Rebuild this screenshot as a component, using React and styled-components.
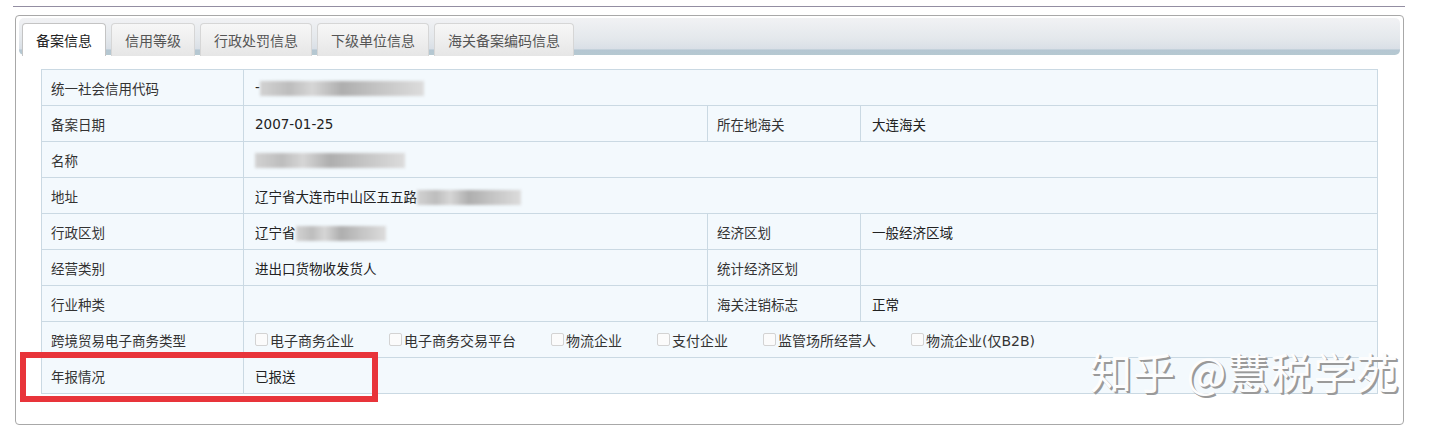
import React from 'react'
import styled, { createGlobalStyle } from 'styled-components'

const GlobalStyle = createGlobalStyle`
  body {
    margin: 0;
    background: #fff;
    font-family: "DejaVu Sans", "Noto Sans CJK SC", sans-serif;
    font-size: 14px;
    color: #333;
  }
`

const tabs = ['备案信息', '信用等级', '行政处罚信息', '下级单位信息', '海关备案编码信息']

const ecomTypes = ['电子商务企业', '电子商务交易平台', '物流企业', '支付企业', '监管场所经营人', '物流企业(仅B2B)']

function App() {
  return (
    <Page>
      <GlobalStyle />
      <TopRule />
      <Panel>
        <TabBar>
          {tabs.map((t, i) => (
            <Tab key={t} $active={i === 0}>{t}</Tab>
          ))}
        </TabBar>
        <Content>
          <InfoTable>
            <colgroup>
              <col style={{ width: 202 }} />
              <col style={{ width: 464 }} />
              <col style={{ width: 153 }} />
              <col />
            </colgroup>
            <tbody>
              <tr>
                <Label>统一社会信用代码</Label>
                <Value colSpan={3}>-<Blur $w={164} /></Value>
              </tr>
              <tr>
                <Label>备案日期</Label>
                <Value>2007-01-25</Value>
                <Label>所在地海关</Label>
                <Value>大连海关</Value>
              </tr>
              <tr>
                <Label>名称</Label>
                <Value colSpan={3}><Blur $w={150} /></Value>
              </tr>
              <tr>
                <Label>地址</Label>
                <Value colSpan={3}>辽宁省大连市中山区五五路<Blur $w={104} /></Value>
              </tr>
              <tr>
                <Label>行政区划</Label>
                <Value>辽宁省<Blur $w={90} /></Value>
                <Label>经济区划</Label>
                <Value>一般经济区域</Value>
              </tr>
              <tr>
                <Label>经营类别</Label>
                <Value>进出口货物收发货人</Value>
                <Label>统计经济区划</Label>
                <Value></Value>
              </tr>
              <tr>
                <Label>行业种类</Label>
                <Value></Value>
                <Label>海关注销标志</Label>
                <Value>正常</Value>
              </tr>
              <tr>
                <Label>跨境贸易电子商务类型</Label>
                <Value colSpan={3}>
                  <CheckRow>
                    {ecomTypes.map((t) => (
                      <CheckItem key={t}>
                        <Box />
                        {t}
                      </CheckItem>
                    ))}
                  </CheckRow>
                </Value>
              </tr>
              <tr>
                <Label>年报情况</Label>
                <Value colSpan={3}>已报送</Value>
              </tr>
            </tbody>
          </InfoTable>
        </Content>
        <Highlight />
        <Watermark>知乎 @慧税学苑</Watermark>
      </Panel>
    </Page>
  )
}

const Page = styled.div`
  width: 1392px;
  padding: 6px 0 4px 13px;
`

const TopRule = styled.div`
  height: 1px;
  background: #938ea2;
`

const Panel = styled.div`
  position: relative;
  margin: 8px 1px 0 2px;
  padding: 2px 3px 30px;
  border: 1px solid #a8a8a8;
  border-radius: 4px;
`

const TabBar = styled.div`
  display: flex;
  align-items: flex-end;
  gap: 5px;
  height: 37px;
  padding-left: 3px;
  box-sizing: border-box;
  border-radius: 5px;
  background: linear-gradient(#f1f2f4 0%, #e4e8ec 55%, #d9dfe6 84%, #b4c6d2 86%, #b6c9d1 100%);
`

const Tab = styled.div`
  height: 33px;
  margin-bottom: -1px;
  padding: 0 13px;
  display: flex;
  align-items: center;
  box-sizing: border-box;
  border: 1px solid #cfcfcf;
  border-bottom: none;
  border-radius: 4px 4px 0 0;
  font-family: "Noto Sans CJK SC", sans-serif;
  font-size: 14px;
  color: ${(p) => (p.$active ? '#222' : '#555')};
  background: ${(p) => (p.$active ? '#fff' : 'linear-gradient(#f7f7f7, #e6e6e6)')};
  border-color: ${(p) => (p.$active ? '#c4c4c4' : '#d6d6d6')};
`

const Content = styled.div`
  padding: 14px 22px 0;
`

const InfoTable = styled.table`
  width: 100%;
  border-collapse: collapse;
  table-layout: fixed;
  background: #f3f9fd;
  tr {
    height: 36px;
  }
`

const Label = styled.td`
  border: 1px solid #cad9e3;
  padding: 0 9px;
  font-family: "Noto Sans CJK SC", sans-serif;
  font-size: 13.5px;
  color: #333;
  white-space: nowrap;
`

const Value = styled.td`
  border: 1px solid #cad9e3;
  padding: 0 11px;
  font-size: 13.5px;
  color: #222;
  white-space: nowrap;
`

const Blur = styled.span`
  display: inline-block;
  width: ${(p) => p.$w}px;
  height: 15px;
  vertical-align: middle;
  background: linear-gradient(90deg, #d2d2d2 0%, #bdbdbd 18%, #d6d6d6 32%, #aeaeae 50%, #c2c2c2 70%, #dcdcdc 100%);
  filter: blur(1.5px);
`

const CheckRow = styled.div`
  display: flex;
  gap: 35px;
`

const CheckItem = styled.span`
  display: inline-flex;
  align-items: center;
  gap: 2px;
  font-family: "DejaVu Sans", "Noto Sans CJK SC", sans-serif;
  font-size: 14px;
  color: #333;
`

const Box = styled.span`
  width: 11px;
  height: 11px;
  border: 1px solid #d3d3d3;
  border-radius: 2px;
  background: #fbfbfb;
`

const Highlight = styled.div`
  position: absolute;
  left: 4px;
  top: 336px;
  width: 358px;
  height: 50px;
  box-sizing: border-box;
  border: 6px solid #e8343a;
  pointer-events: none;
`

const Watermark = styled.div`
  position: absolute;
  left: 1074px;
  top: 324px;
  font-family: "Noto Sans CJK SC", sans-serif;
  font-size: 42px;
  letter-spacing: 1px;
  color: #fdfdfd;
  text-shadow: 2px 2px 0 #9a9a9a, 1px 1px 0 #b5b5b5;
  white-space: nowrap;
  pointer-events: none;
`

export default App
